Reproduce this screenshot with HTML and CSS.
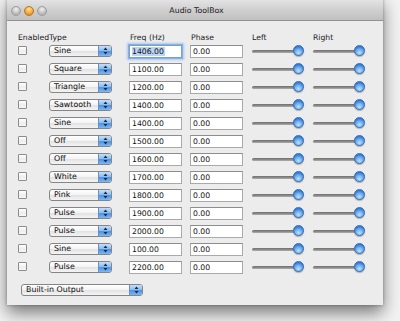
FILE: index.html
```html
<!DOCTYPE html>
<html>
<head>
<meta charset="utf-8">
<link rel="stylesheet" href="styles.css">
</head>
<body>
<div class="window">
  <div class="titlebar">
    <div class="lights">
      <span class="light gray"></span>
      <span class="light orange"></span>
      <span class="light gray"></span>
    </div>
    <div class="title">Audio ToolBox</div>
  </div>
  <div class="content">
    <div class="row header">
      <span>Enabled</span><span>Type</span><span class="h-freq">Freq (Hz)</span><span class="h-phase">Phase</span><span>Left</span><span>Right</span>
    </div>

    <div class="row"><span class="check"></span><span class="popup"><span class="plabel">Sine</span><span class="parrow"><svg width="5" height="8" viewBox="0 0 5 8"><path d="M2.5 0.5L4.5 3H0.5Z M2.5 7.5L4.5 5H0.5Z" fill="#1a2a40"/></svg></span></span><span class="field focused"><span class="sel">1406.00</span></span><span class="field">0.00</span><span class="slider"><span class="track"></span><span class="knob"></span></span><span class="slider"><span class="track"></span><span class="knob"></span></span></div>

    <div class="row"><span class="check"></span><span class="popup"><span class="plabel">Square</span><span class="parrow"><svg width="5" height="8" viewBox="0 0 5 8"><path d="M2.5 0.5L4.5 3H0.5Z M2.5 7.5L4.5 5H0.5Z" fill="#1a2a40"/></svg></span></span><span class="field">1100.00</span><span class="field">0.00</span><span class="slider"><span class="track"></span><span class="knob"></span></span><span class="slider"><span class="track"></span><span class="knob"></span></span></div>

    <div class="row"><span class="check"></span><span class="popup"><span class="plabel">Triangle</span><span class="parrow"><svg width="5" height="8" viewBox="0 0 5 8"><path d="M2.5 0.5L4.5 3H0.5Z M2.5 7.5L4.5 5H0.5Z" fill="#1a2a40"/></svg></span></span><span class="field">1200.00</span><span class="field">0.00</span><span class="slider"><span class="track"></span><span class="knob"></span></span><span class="slider"><span class="track"></span><span class="knob"></span></span></div>

    <div class="row"><span class="check"></span><span class="popup"><span class="plabel">Sawtooth</span><span class="parrow"><svg width="5" height="8" viewBox="0 0 5 8"><path d="M2.5 0.5L4.5 3H0.5Z M2.5 7.5L4.5 5H0.5Z" fill="#1a2a40"/></svg></span></span><span class="field">1400.00</span><span class="field">0.00</span><span class="slider"><span class="track"></span><span class="knob"></span></span><span class="slider"><span class="track"></span><span class="knob"></span></span></div>

    <div class="row"><span class="check"></span><span class="popup"><span class="plabel">Sine</span><span class="parrow"><svg width="5" height="8" viewBox="0 0 5 8"><path d="M2.5 0.5L4.5 3H0.5Z M2.5 7.5L4.5 5H0.5Z" fill="#1a2a40"/></svg></span></span><span class="field">1400.00</span><span class="field">0.00</span><span class="slider"><span class="track"></span><span class="knob"></span></span><span class="slider"><span class="track"></span><span class="knob"></span></span></div>

    <div class="row"><span class="check"></span><span class="popup"><span class="plabel">Off</span><span class="parrow"><svg width="5" height="8" viewBox="0 0 5 8"><path d="M2.5 0.5L4.5 3H0.5Z M2.5 7.5L4.5 5H0.5Z" fill="#1a2a40"/></svg></span></span><span class="field">1500.00</span><span class="field">0.00</span><span class="slider"><span class="track"></span><span class="knob"></span></span><span class="slider"><span class="track"></span><span class="knob"></span></span></div>

    <div class="row"><span class="check"></span><span class="popup"><span class="plabel">Off</span><span class="parrow"><svg width="5" height="8" viewBox="0 0 5 8"><path d="M2.5 0.5L4.5 3H0.5Z M2.5 7.5L4.5 5H0.5Z" fill="#1a2a40"/></svg></span></span><span class="field">1600.00</span><span class="field">0.00</span><span class="slider"><span class="track"></span><span class="knob"></span></span><span class="slider"><span class="track"></span><span class="knob"></span></span></div>

    <div class="row"><span class="check"></span><span class="popup"><span class="plabel">White</span><span class="parrow"><svg width="5" height="8" viewBox="0 0 5 8"><path d="M2.5 0.5L4.5 3H0.5Z M2.5 7.5L4.5 5H0.5Z" fill="#1a2a40"/></svg></span></span><span class="field">1700.00</span><span class="field">0.00</span><span class="slider"><span class="track"></span><span class="knob"></span></span><span class="slider"><span class="track"></span><span class="knob"></span></span></div>

    <div class="row"><span class="check"></span><span class="popup"><span class="plabel">Pink</span><span class="parrow"><svg width="5" height="8" viewBox="0 0 5 8"><path d="M2.5 0.5L4.5 3H0.5Z M2.5 7.5L4.5 5H0.5Z" fill="#1a2a40"/></svg></span></span><span class="field">1800.00</span><span class="field">0.00</span><span class="slider"><span class="track"></span><span class="knob"></span></span><span class="slider"><span class="track"></span><span class="knob"></span></span></div>

    <div class="row"><span class="check"></span><span class="popup"><span class="plabel">Pulse</span><span class="parrow"><svg width="5" height="8" viewBox="0 0 5 8"><path d="M2.5 0.5L4.5 3H0.5Z M2.5 7.5L4.5 5H0.5Z" fill="#1a2a40"/></svg></span></span><span class="field">1900.00</span><span class="field">0.00</span><span class="slider"><span class="track"></span><span class="knob"></span></span><span class="slider"><span class="track"></span><span class="knob"></span></span></div>

    <div class="row"><span class="check"></span><span class="popup"><span class="plabel">Pulse</span><span class="parrow"><svg width="5" height="8" viewBox="0 0 5 8"><path d="M2.5 0.5L4.5 3H0.5Z M2.5 7.5L4.5 5H0.5Z" fill="#1a2a40"/></svg></span></span><span class="field">2000.00</span><span class="field">0.00</span><span class="slider"><span class="track"></span><span class="knob"></span></span><span class="slider"><span class="track"></span><span class="knob"></span></span></div>

    <div class="row"><span class="check"></span><span class="popup"><span class="plabel">Sine</span><span class="parrow"><svg width="5" height="8" viewBox="0 0 5 8"><path d="M2.5 0.5L4.5 3H0.5Z M2.5 7.5L4.5 5H0.5Z" fill="#1a2a40"/></svg></span></span><span class="field">100.00</span><span class="field">0.00</span><span class="slider"><span class="track"></span><span class="knob"></span></span><span class="slider"><span class="track"></span><span class="knob"></span></span></div>

    <div class="row"><span class="check"></span><span class="popup"><span class="plabel">Pulse</span><span class="parrow"><svg width="5" height="8" viewBox="0 0 5 8"><path d="M2.5 0.5L4.5 3H0.5Z M2.5 7.5L4.5 5H0.5Z" fill="#1a2a40"/></svg></span></span><span class="field">2200.00</span><span class="field">0.00</span><span class="slider"><span class="track"></span><span class="knob"></span></span><span class="slider"><span class="track"></span><span class="knob"></span></span></div>

    <div class="output-row">
      <span class="popup wide"><span class="plabel">Built-in Output</span><span class="parrow"><svg width="5" height="8" viewBox="0 0 5 8"><path d="M2.5 0.5L4.5 3H0.5Z M2.5 7.5L4.5 5H0.5Z" fill="#1a2a40"/></svg></span></span>
    </div>
  </div>
</div>
</body>
</html>
```
FILE: styles.css
```css
html, body {
  margin: 0;
  padding: 0;
}
body {
  width: 400px;
  height: 321px;
  overflow: hidden;
  background: #f3f3f3;
  font-family: "DejaVu Sans", "Liberation Sans", sans-serif;
  font-size: 7.7px;
  color: #1c1c1c;
}
.window {
  margin-left: 7px;
  width: 376px;
  background: #ececec;
  box-shadow: 0 8px 16px rgba(0, 0, 0, 0.5), 0 0 3px rgba(0, 0, 0, 0.3);
}
.titlebar {
  height: 19px;
  padding-top: 4px;
  margin-top: -3px;
  box-sizing: content-box;
  background: linear-gradient(#e9e9e9, #d2d2d2 50%, #c0c0c0);
  border-bottom: 1px solid #939393;
  display: flex;
  align-items: center;
  position: relative;
}
.lights {
  display: flex;
  gap: 3px;
  padding-left: 4px;
}
.light {
  width: 10px;
  height: 10px;
  border-radius: 50%;
  box-sizing: border-box;
}
.light.gray {
  background: radial-gradient(circle at 50% 30%, #f2f2f2, #bdbdbd 60%, #a9a9a9);
  border: 1px solid #9d9d9d;
}
.light.orange {
  background: radial-gradient(circle at 50% 30%, #ffe3a0, #f6a634 55%, #d6801c);
  border: 1px solid #b87422;
}
.title {
  flex: 1;
  text-align: center;
  font-size: 7.8px;
  color: #222;
  margin-right: 37px;
}
.content {
  padding: 12px 0 9px 11px;
}
.row {
  display: grid;
  grid-template-columns: 31px 80px 61px 62px 61px 55px;
  height: 18px;
  align-items: center;
}
.row.header {
  height: 9px;
  line-height: 9px;
  color: #1a1a1a;
}
.h-freq, .h-phase {
  padding-left: 1px;
}
.check {
  width: 9px;
  height: 9px;
  box-sizing: border-box;
  border: 1px solid #8c8c8c;
  border-radius: 1px;
  background: linear-gradient(#ffffff, #ededed 60%, #f8f8f8);
  margin-top: -1px;
}
.popup {
  width: 63px;
  height: 12px;
  box-sizing: border-box;
  border: 1px solid #858585;
  border-radius: 3px;
  background: linear-gradient(#ffffff, #f3f3f3 50%, #e3e3e3 55%, #f4f4f4);
  display: flex;
  align-items: stretch;
  overflow: hidden;
}
.plabel {
  flex: 1;
  padding-left: 4px;
  line-height: 10px;
  font-size: 7.9px;
  white-space: nowrap;
  color: #0e0e0e;
}
.parrow {
  width: 12px;
  background: linear-gradient(#c6defa, #8ebef0 45%, #4d94e4 55%, #7db7f4);
  border-left: 1px solid #6d8fb8;
  display: flex;
  align-items: center;
  justify-content: center;
}
.field {
  width: 53px;
  height: 13px;
  box-sizing: border-box;
  border: 1px solid #a9a9a9;
  border-top-color: #8d8d8d;
  background: #fff;
  padding-left: 2px;
  line-height: 11px;
  color: #111;
}
.field.focused {
  box-shadow: 0 0 0 1px #86b1e6, 0 0 2px 2px #a9c9f0;
  border-color: #7d9fcc;
}
.sel {
  background: #b9d4f6;
  padding-right: 1px;
}
.slider {
  width: 52px;
  height: 12px;
  position: relative;
  display: flex;
  align-items: center;
}
.track {
  display: block;
  width: 48px;
  height: 3px;
  border-radius: 2px;
  background: linear-gradient(#6e6e6e, #8e8e8e 60%, #b0b0b0);
}
.knob {
  position: absolute;
  right: 0;
  top: 0;
  width: 11px;
  height: 11px;
  box-sizing: border-box;
  border-radius: 50%;
  border: 1px solid #3f73b3;
  background: radial-gradient(circle at 50% 75%, #bfe2ff, #6aabf0 45%, #2f7ad8 75%),
              #4a90e0;
  box-shadow: 0 1px 1px rgba(0, 0, 0, 0.25);
}
.output-row {
  margin-top: 8px;
  padding-left: 3px;
}
.popup.wide {
  width: 122px;
}
```
